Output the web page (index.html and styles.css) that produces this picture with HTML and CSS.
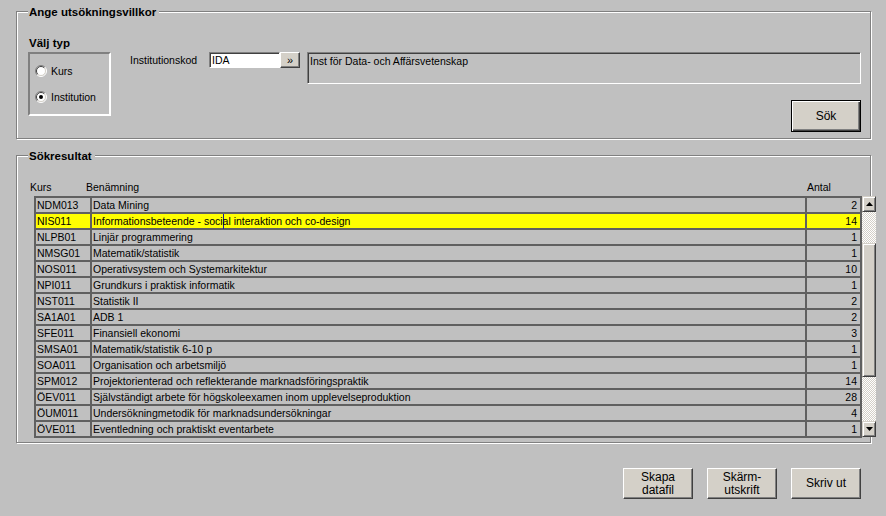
FILE: index.html
```html
<!DOCTYPE html>
<html lang="sv">
<head>
<meta charset="utf-8">
<title>Sökning</title>
<link rel="stylesheet" href="styles.css">
</head>
<body>
<div class="app">
  <section class="group search">
    <span class="legend">Ange utsökningsvillkor</span>
    <div class="search-body">
      <div class="type-col">
        <div class="type-title">Välj typ</div>
        <div class="radio-box">
          <div class="radio">
            <svg width="12" height="12" viewBox="0 0 12 12">
              <circle cx="6" cy="6" r="5" fill="#fff"/>
              <path d="M2.1 9.9 A5.5 5.5 0 0 1 9.9 2.1" fill="none" stroke="#808080"/>
              <path d="M9.9 2.1 A5.5 5.5 0 0 1 2.1 9.9" fill="none" stroke="#fff"/>
              <path d="M2.8 9.2 A4.5 4.5 0 0 1 9.2 2.8" fill="none" stroke="#404040"/>
              <path d="M9.2 2.8 A4.5 4.5 0 0 1 2.8 9.2" fill="none" stroke="#d4d0c8"/>
            </svg>
            <span>Kurs</span>
          </div>
          <div class="radio">
            <svg width="12" height="12" viewBox="0 0 12 12">
              <circle cx="6" cy="6" r="5" fill="#fff"/>
              <path d="M2.1 9.9 A5.5 5.5 0 0 1 9.9 2.1" fill="none" stroke="#808080"/>
              <path d="M9.9 2.1 A5.5 5.5 0 0 1 2.1 9.9" fill="none" stroke="#fff"/>
              <path d="M2.8 9.2 A4.5 4.5 0 0 1 9.2 2.8" fill="none" stroke="#404040"/>
              <path d="M9.2 2.8 A4.5 4.5 0 0 1 2.8 9.2" fill="none" stroke="#d4d0c8"/>
              <circle cx="6" cy="6" r="2" fill="#000"/>
            </svg>
            <span>Institution</span>
          </div>
        </div>
      </div>
      <div class="inst-col">
        <div class="inst-row">
          <span class="inst-label">Institutionskod</span>
          <div class="code-input">IDA</div>
          <button class="pick">»</button>
          <div class="inst-name">Inst för Data- och Affärsvetenskap</div>
        </div>
        <div class="search-actions">
          <button class="btn btn-default">Sök</button>
        </div>
      </div>
    </div>
  </section>

  <section class="group results">
    <span class="legend">Sökresultat</span>
    <div class="results-body">
      <div class="head">
        <span class="h-kurs">Kurs</span>
        <span class="h-ben">Benämning</span>
        <span class="h-antal">Antal</span>
      </div>
      <div class="table-wrap">
        <div class="table">
          <div class="row"><div class="cell">NDM013</div><div class="cell">Data Mining</div><div class="cell num">2</div></div>
          <div class="row sel"><div class="cell">NIS011</div><div class="cell">Informationsbeteende - soci<span class="caret"></span>al interaktion och co-design</div><div class="cell num">14</div></div>
          <div class="row"><div class="cell">NLPB01</div><div class="cell">Linjär programmering</div><div class="cell num">1</div></div>
          <div class="row"><div class="cell">NMSG01</div><div class="cell">Matematik/statistik</div><div class="cell num">1</div></div>
          <div class="row"><div class="cell">NOS011</div><div class="cell">Operativsystem och Systemarkitektur</div><div class="cell num">10</div></div>
          <div class="row"><div class="cell">NPI011</div><div class="cell">Grundkurs i praktisk informatik</div><div class="cell num">1</div></div>
          <div class="row"><div class="cell">NST011</div><div class="cell">Statistik II</div><div class="cell num">2</div></div>
          <div class="row"><div class="cell">SA1A01</div><div class="cell">ADB 1</div><div class="cell num">2</div></div>
          <div class="row"><div class="cell">SFE011</div><div class="cell">Finansiell ekonomi</div><div class="cell num">3</div></div>
          <div class="row"><div class="cell">SMSA01</div><div class="cell">Matematik/statistik 6-10 p</div><div class="cell num">1</div></div>
          <div class="row"><div class="cell">SOA011</div><div class="cell">Organisation och arbetsmiljö</div><div class="cell num">1</div></div>
          <div class="row"><div class="cell">SPM012</div><div class="cell">Projektorienterad och reflekterande marknadsföringspraktik</div><div class="cell num">14</div></div>
          <div class="row"><div class="cell">ÖEV011</div><div class="cell">Självständigt arbete för högskoleexamen inom upplevelseproduktion</div><div class="cell num">28</div></div>
          <div class="row"><div class="cell">ÖUM011</div><div class="cell">Undersökningmetodik för marknadsundersökningar</div><div class="cell num">4</div></div>
          <div class="row"><div class="cell">ÖVE011</div><div class="cell">Eventledning och praktiskt eventarbete</div><div class="cell num">1</div></div>
        </div>
        <div class="scrollbar">
          <div class="sb-btn"><svg width="7" height="4" viewBox="0 0 7 4"><path d="M3.5 0 L7 4 L0 4 Z" fill="#000"/></svg></div>
          <div class="sb-track sb-top"></div>
          <div class="sb-thumb"></div>
          <div class="sb-track sb-bottom"></div>
          <div class="sb-btn"><svg width="7" height="4" viewBox="0 0 7 4"><path d="M0 0 L7 0 L3.5 4 Z" fill="#000"/></svg></div>
        </div>
      </div>
    </div>
  </section>

  <div class="footer">
    <button class="btn">Skapa<br>datafil</button>
    <button class="btn">Skärm-<br>utskrift</button>
    <button class="btn">Skriv ut</button>
  </div>
</div>
</body>
</html>
```

FILE: styles.css
```css
html, body {
  margin: 0;
  padding: 0;
}
body {
  background: #c0c0c0;
  width: 886px;
  height: 516px;
  overflow: hidden;
  font-family: "Liberation Sans", Arial, sans-serif;
  font-size: 10.5px;
  color: #000;
}
.app {
  padding-left: 16px;
  padding-top: 11px;
}
.group {
  position: relative;
  width: 855px;
  box-sizing: border-box;
  border: 1px solid #808080;
  box-shadow: inset 1px 1px 0 #fff, 1px 1px 0 #fff;
}
.legend {
  position: absolute;
  top: -7px;
  left: 11px;
  padding: 0 3px 0 1px;
  background: #c0c0c0;
  font-weight: bold;
  font-size: 11.5px;
  line-height: 14px;
}
.search {
  height: 128px;
}
.search-body {
  display: flex;
  padding: 24px 9px 0 11px;
}
.type-col {
  width: 83px;
  flex-shrink: 0;
}
.type-title {
  font-weight: bold;
  font-size: 11.5px;
  line-height: 14px;
  padding-left: 1px;
  margin-bottom: 2px;
}
.radio-box {
  height: 64px;
  box-sizing: border-box;
  border: 2px solid;
  border-color: #808080 #fff #fff #808080;
  padding: 10px 0 0 5px;
  display: flex;
  flex-direction: column;
  gap: 12px;
}
.radio {
  display: flex;
  align-items: center;
  gap: 4px;
  height: 14px;
  line-height: 14px;
}
.radio svg {
  display: block;
}
.inst-col {
  flex: 1;
  margin-left: 19px;
  margin-top: 16px;
}
.inst-row {
  display: flex;
  align-items: flex-start;
}
.inst-label {
  width: 79px;
  line-height: 16px;
}
.code-input {
  width: 71px;
  height: 16px;
  box-sizing: border-box;
  background: #fff;
  border-top: 1px solid #808080;
  border-left: 1px solid #808080;
  border-bottom: 1px solid #fff;
  border-right: 1px solid #fff;
  box-shadow: inset 1px 1px 0 #404040;
  padding-left: 2px;
  line-height: 14px;
}
.pick {
  width: 20px;
  height: 16px;
  box-sizing: border-box;
  margin: 0;
  padding: 0;
  background: #d4d0c8;
  border: 1px solid;
  border-color: #fff #404040 #404040 #fff;
  box-shadow: inset -1px -1px 0 #808080;
  font-family: "Liberation Sans", Arial, sans-serif;
  font-size: 11px;
  line-height: 12px;
  color: #000;
}
.inst-name {
  flex: 1;
  margin-left: 7px;
  height: 32px;
  box-sizing: border-box;
  border: 1px solid;
  border-color: #808080 #fff #fff #808080;
  box-shadow: inset 1px 1px 0 #404040;
  padding: 1px 0 0 2px;
  line-height: 14px;
}
.search-actions {
  display: flex;
  justify-content: flex-end;
  margin-top: 16px;
}
.btn {
  width: 70px;
  height: 31px;
  box-sizing: border-box;
  margin: 0;
  padding: 0;
  background: #d4d0c8;
  border: 1px solid;
  border-color: #fff #404040 #404040 #fff;
  box-shadow: inset -1px -1px 0 #808080;
  font-family: "Liberation Sans", Arial, sans-serif;
  font-size: 12px;
  line-height: 13px;
  color: #000;
}
.btn-default {
  height: 32px;
  border: 1px solid #000;
  box-shadow: inset 1px 1px 0 #fff, inset -1px -1px 0 #404040, inset -2px -2px 0 #808080;
}
.results {
  margin-top: 16px;
  height: 288px;
}
.results-body {
  padding: 24px 0 0 17px;
}
.head {
  display: flex;
  height: 14px;
  line-height: 14px;
  margin-left: -4px;
  margin-bottom: 2px;
}
.h-kurs {
  width: 56px;
}
.h-ben {
  width: 721px;
}
.table-wrap {
  display: flex;
  align-items: flex-start;
}
.table {
  width: 828px;
  flex-shrink: 0;
  box-sizing: border-box;
  border: 1px solid #606060;
}
.row {
  display: grid;
  grid-template-columns: 56px 715px 55px;
}
.cell {
  height: 16px;
  box-sizing: border-box;
  border: 1px solid #606060;
  padding-left: 1px;
  line-height: 14px;
  white-space: nowrap;
}
.cell.num {
  text-align: right;
  padding-left: 0;
  padding-right: 3px;
}
.row.sel .cell {
  background: #ffff00;
}
.caret {
  display: inline-block;
  width: 0;
  height: 15px;
  border-left: 1px solid #1a1a9a;
  margin-right: -1px;
  vertical-align: top;
}
.scrollbar {
  width: 14px;
  flex-shrink: 0;
  height: 241px;
  display: flex;
  flex-direction: column;
}
.sb-btn {
  height: 16px;
  box-sizing: border-box;
  background: #d4d0c8;
  border: 1px solid;
  border-color: #d4d0c8 #404040 #404040 #d4d0c8;
  box-shadow: inset 1px 1px 0 #fff, inset -1px -1px 0 #808080;
  display: flex;
  align-items: center;
  justify-content: center;
}
.sb-btn svg {
  display: block;
}
.sb-track {
  background: repeating-conic-gradient(#fff 0 25%, #d4d0c8 0 50%) 0 0 / 2px 2px;
}
.sb-top {
  height: 31px;
}
.sb-thumb {
  height: 134px;
  box-sizing: border-box;
  background: #d4d0c8;
  border: 1px solid;
  border-color: #d4d0c8 #404040 #404040 #d4d0c8;
  box-shadow: inset 1px 1px 0 #fff, inset -1px -1px 0 #808080;
}
.sb-bottom {
  flex: 1;
}
.footer {
  width: 855px;
  box-sizing: border-box;
  padding-right: 10px;
  margin-top: 25px;
  display: flex;
  justify-content: flex-end;
  gap: 14px;
}
```
